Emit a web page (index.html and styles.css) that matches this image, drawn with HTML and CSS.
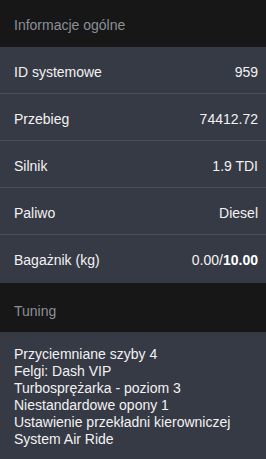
FILE: index.html
```html
<!DOCTYPE html>
<html lang="pl">
<head>
  <meta charset="UTF-8" />
  <meta name="viewport" content="width=device-width, initial-scale=1.0" />
  <title>Pojazd</title>
  <link rel="stylesheet" href="styles.css">
</head>
<body>
  <div class="panel">
    <div class="section-title">Informacje ogólne</div>
    <div class="info-row"><span>ID systemowe</span><span>959</span></div>
    <div class="info-row"><span>Przebieg</span><span>74412.72</span></div>
    <div class="info-row"><span>Silnik</span><span>1.9 TDI</span></div>
    <div class="info-row"><span>Paliwo</span><span>Diesel</span></div>
    <div class="info-row last"><span>Bagażnik (kg)</span><span>0.00/<b>10.00</b></span></div>

    <div class="section-title tuning">Tuning</div>
    <div class="tuning-list">
      <div>Przyciemniane szyby 4</div>
      <div>Felgi: Dash VIP</div>
      <div>Turbosprężarka - poziom 3</div>
      <div>Niestandardowe opony 1</div>
      <div>Ustawienie przekładni kierowniczej</div>
      <div>System Air Ride</div>
    </div>
  </div>
</body>
</html>
```

FILE: styles.css
```css
* {
  margin: 0;
  padding: 0;
  box-sizing: border-box;
  font-family: 'Liberation Sans', Arial, sans-serif;
}
body {
  background-color: #363a45;
  color: #f2f2f2;
  font-size: 14px;
  line-height: 16px;
}
.section-title {
  background: #171717;
  color: #8b8f98;
  padding: 17px 14px 14px;
}
.section-title.tuning {
  padding-top: 20px;
  padding-bottom: 13px;
}
.info-row {
  display: flex;
  justify-content: space-between;
  padding: 17px 8px 13px 14px;
  border-bottom: 1px solid #4a4e59;
}
.info-row.last {
  border-bottom: none;
  padding-bottom: 15px;
}
.info-row b {
  font-weight: bold;
  color: #ffffff;
}
.tuning-list {
  padding: 14px;
  line-height: 17px;
}
```
